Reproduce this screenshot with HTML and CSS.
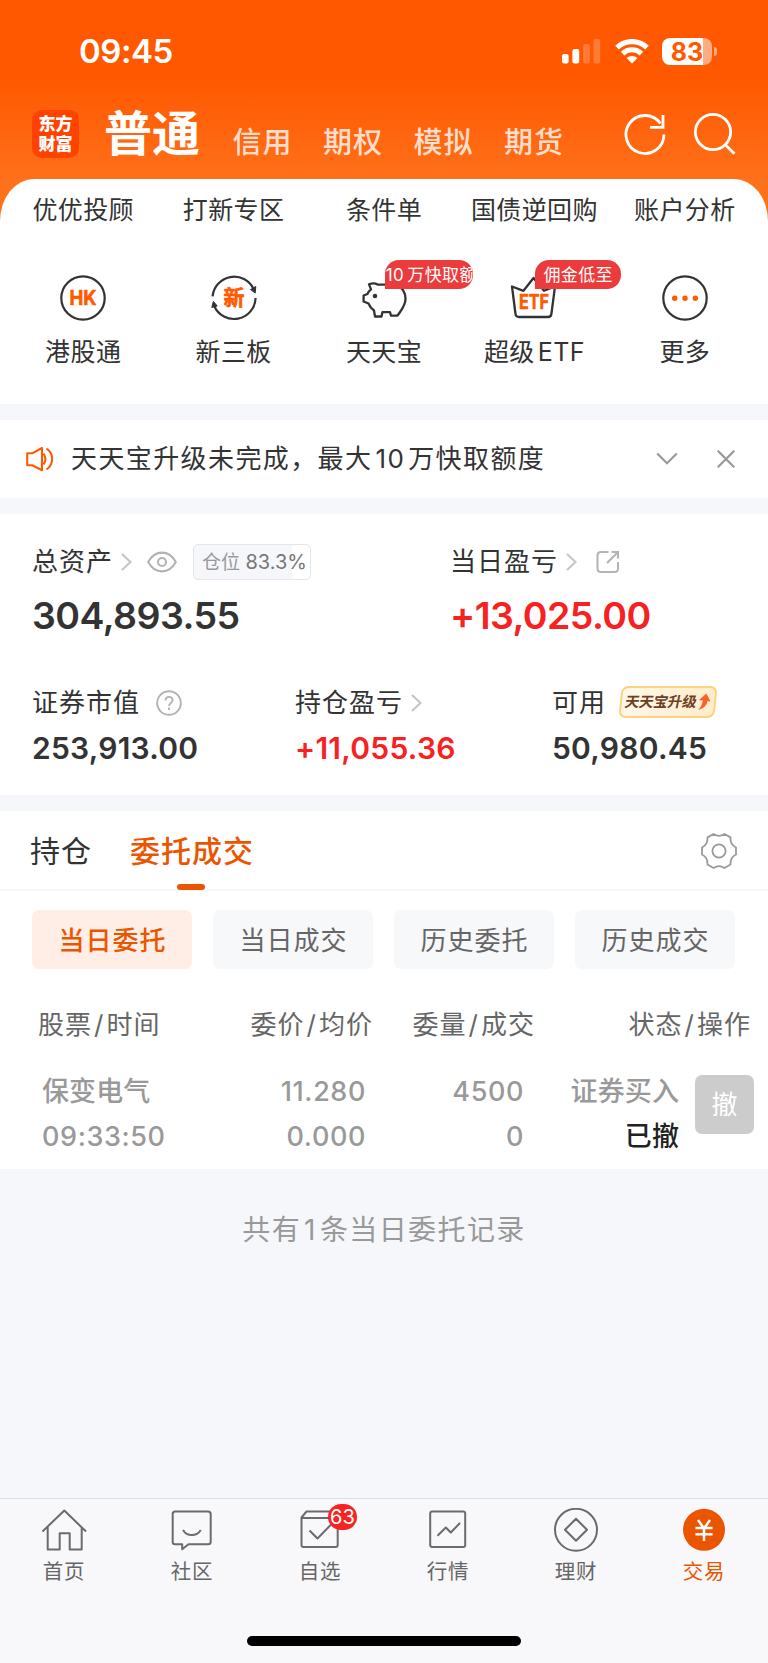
FILE: index.html
```
<!DOCTYPE html>
<html lang="zh-CN">
<head>
  <meta charset="UTF-8">
  <meta name="viewport" content="width=device-width, initial-scale=1.0">
  <title>交易</title>
  <link rel="stylesheet" href="styles.css">
</head>
<body>
  <header class="header">
    <div class="status-bar">
      <div class="time">09:45</div>
      <svg class="signal" width="39" height="25" viewBox="0 0 39 25" fill="#fff">
        <rect x="0" y="15" width="6.6" height="9.5" rx="2"/>
        <rect x="10.4" y="10" width="6.8" height="14.5" rx="2"/>
        <rect x="21.2" y="5" width="6.6" height="19.5" rx="2" opacity=".22"/>
        <rect x="31.4" y="0" width="6.8" height="24.5" rx="2" opacity=".22"/>
      </svg>
      <svg class="wifi" width="34" height="25" viewBox="0 0 34 25" fill="none" stroke="#fff">
        <path d="M2 8.6a21.6 21.6 0 0 1 30 0" stroke-width="5.2"/>
        <path d="M7.600 14.600a13.600 13.600 0 0 1 18.800 0" stroke-width="5"/>
        <path d="M17 24.500l-5.400-5.400a7.800 7.800 0 0 1 10.800 0z" fill="#fff" stroke="none"/>
      </svg>
      <div class="battery">83</div>
    </div>
    <nav class="top-nav">
      <div class="logo">东方<br>财富</div>
      <div class="nav-main">普通</div>
      <div class="nav-item">信用</div>
      <div class="nav-item">期权</div>
      <div class="nav-item">模拟</div>
      <div class="nav-item">期货</div>
      <svg class="refresh" width="42" height="42" viewBox="0 0 42 42" fill="none" stroke="#fff" stroke-width="2.8">
        <path d="M40 21.5A19 19 0 1 1 36.5 10.5"/>
        <path d="M39 2v12.3H26"/>
      </svg>
      <svg class="search" width="42" height="42" viewBox="0 0 42 42" fill="none" stroke="#fff" stroke-width="2.8">
        <circle cx="19" cy="19" r="17.6"/>
        <path d="M31 31.5l9.4 9.2"/>
      </svg>
    </nav>
  </header>

  <section class="shortcuts">
    <div class="shortcut-text">优优投顾</div>
    <div class="shortcut-text">打新专区</div>
    <div class="shortcut-text">条件单</div>
    <div class="shortcut-text">国债逆回购</div>
    <div class="shortcut-text">账户分析</div>

    <div class="shortcut">
      <svg width="48" height="48" viewBox="0 0 48 48" fill="none" stroke="#333" stroke-width="2.2">
        <circle cx="24" cy="24" r="21.7"/>
        <text class="icon-text" x="24" y="31" font-size="19.5" textLength="27" lengthAdjust="spacingAndGlyphs">HK</text>
      </svg>
      <span>港股通</span>
    </div>
    <div class="shortcut">
      <svg width="48" height="48" viewBox="0 0 48 48" fill="none" stroke="#333" stroke-width="2.2">
        <path d="M2.6 22.4A21.6 21.6 0 0 1 43.6 15"/>
        <path d="M45.6 24A21.6 21.6 0 0 1 4.2 32"/>
        <path d="M40.5 15.6l5.3-3.2-.6 6.6zM1.8 33.4l1.6-6 3.8 4.6z" fill="#333" stroke-width="1"/>
        <text class="icon-text" x="24" y="31.4" font-size="21">新</text>
      </svg>
      <span>新三板</span>
    </div>
    <div class="shortcut">
      <svg width="48" height="48" viewBox="0 0 48 48" fill="none" stroke="#333" stroke-width="2.3" stroke-linejoin="round">
        <path d="M9 10.3q5-2 9 .4h18c6 2 9.5 8 9.5 14 0 7-4 11-8 17h-6.500l-1-3.600H22.500l-1 4.400h-6.500l-1-6c-3-2-4.500-4.500-5.500-7L3.600 27.500v-6L7.500 20c.6-2 1.800-3.300 3.500-4.600z"/>
        <circle cx="15" cy="22" r="2.3" fill="#333" stroke="none"/>
      </svg>
      <em class="badge badge-clip">10<i></i>万快取额</em>
      <span>天天宝</span>
    </div>
    <div class="shortcut">
      <svg width="48" height="48" viewBox="0 0 48 48" fill="none" stroke="#333" stroke-width="2.3" stroke-linejoin="round">
        <path d="M2 12.5L5.500 40q.3 3 3.500 3h29q3 0 3.400-3L45 12.500l-11 4.300L23.500 4 13.500 16.800z"/>
        <text class="icon-text" x="24" y="35.4" font-size="20" textLength="30" lengthAdjust="spacingAndGlyphs">ETF</text>
      </svg>
      <em class="badge">佣金低至</em>
      <span>超级<i></i>ETF</span>
    </div>
    <div class="shortcut">
      <svg width="48" height="48" viewBox="0 0 48 48" fill="none" stroke="#333" stroke-width="2.2">
        <circle cx="24" cy="24" r="21.7"/>
        <g fill="#ff5a00" stroke="none">
          <circle cx="13.7" cy="24.2" r="2.7"/>
          <circle cx="24" cy="24.2" r="2.7"/>
          <circle cx="34.3" cy="24.2" r="2.7"/>
        </g>
      </svg>
      <span>更多</span>
    </div>
  </section>

  <section class="notice">
    <svg width="28" height="26" viewBox="0 0 28 26" fill="none" stroke="#ff5a00" stroke-width="2.1" stroke-linejoin="round">
      <path d="M1.2 7.3h5L16 2v22.300l-9.800-5H1.200z"/>
      <path d="M17.5 7.5q3.800 5.600 0 11M20.500 2.500c7.500 5 7.500 16 0 21"/>
    </svg>
    <p>天天宝升级未完成，最大<i></i>10<i></i>万快取额度</p>
    <svg class="down" width="22" height="14" viewBox="0 0 22 14" fill="none" stroke="#999" stroke-width="2.2"><path d="M1.2 1.5L11 11.200l9.800-9.700"/></svg>
    <svg width="18" height="18" viewBox="0 0 18 18" fill="none" stroke="#999" stroke-width="2.2"><path d="M.7.7l16.600 16.600M17.300.7L.7 17.300"/></svg>
  </section>

  <section class="assets">
    <div class="asset-row big">
      <div class="asset">
        <div class="label">
          总资产
          <svg class="arrow" width="11" height="18" viewBox="0 0 11 18"><path d="M1 1l8.500 8L1 17"/></svg>
          <svg class="eye" width="30" height="22" viewBox="0 0 30 22" fill="none" stroke="#b3b3b3" stroke-width="2.1">
            <path d="M1.2 11C8-1.500 22-1.500 28.800 11 22 23.500 8 23.500 1.200 11z"/>
            <circle cx="15" cy="11" r="4"/>
          </svg>
          <span class="position">仓位 <b>83.3%</b></span>
        </div>
        <div class="value">304,893.55</div>
      </div>
      <div class="asset">
        <div class="label">
          当日盈亏
          <svg class="arrow" width="11" height="18" viewBox="0 0 11 18"><path d="M1 1l8.500 8L1 17"/></svg>
          <svg class="share" width="24" height="24" viewBox="0 0 24 24" fill="none" stroke="#b3b3b3" stroke-width="2">
            <path d="M12.5 2H5Q1.500 2 1.500 5.500v13Q1.500 22 5 22h13.500q3.500 0 3.500-3.500V12"/>
            <path d="M11 13L21.800 2.200M15.500 2H22v6.500"/>
          </svg>
        </div>
        <div class="value red">+13,025.00</div>
      </div>
    </div>
    <div class="asset-row small">
      <div class="asset">
        <div class="label">
          证券市值
          <svg class="help" width="26" height="26" viewBox="0 0 26 26" fill="none" stroke="#b3b3b3" stroke-width="1.9">
            <circle cx="13" cy="13" r="11.8"/>
            <path d="M9.6 10.500c0-4.800 7-4.600 7-.4 0 2.700-3.600 3-3.600 6M13 17.600v2.400"/>
          </svg>
        </div>
        <div class="value">253,913.00</div>
      </div>
      <div class="asset">
        <div class="label">
          持仓盈亏
          <svg class="arrow" width="11" height="18" viewBox="0 0 11 18"><path d="M1 1l8.500 8L1 17"/></svg>
        </div>
        <div class="value red">+11,055.36</div>
      </div>
      <div class="asset">
        <div class="label">
          可用
          <span class="upgrade"><span>天天宝升级</span>
            <svg width="13" height="18" viewBox="0 0 13 18"><path d="M7.5.5l5 8-3.200-.5c0 4-2.800 7.500-8.300 9 2.600-2.800 3.600-6 3.600-9.500L.8 7z" fill="#f8602d"/></svg>
          </span>
        </div>
        <div class="value">50,980.45</div>
      </div>
    </div>
  </section>

  <section class="orders">
    <div class="tabs">
      <div class="tab">持仓</div>
      <div class="tab active">委托成交</div>
      <svg class="gear" width="38" height="38" viewBox="0 0 38 38" fill="none" stroke="#999" stroke-width="1.8" stroke-linejoin="round">
        <path d="M13.5 2Q19 5.600 24.500 2L30.500 5.400Q30 12.500 36 15.500V22.500Q30 25.500 30.500 32.500L24.500 36Q19 32.400 13.500 36L7.500 32.500Q8 25.500 2 22.500V15.500Q8 12.500 7.500 5.400z"/>
        <circle cx="19" cy="19" r="6.6"/>
      </svg>
    </div>
    <div class="filters">
      <div class="filter active">当日委托</div>
      <div class="filter">当日成交</div>
      <div class="filter">历史委托</div>
      <div class="filter">历史成交</div>
    </div>
    <div class="table-head">
      <div>股票<s>/</s>时间</div>
      <div>委价<s>/</s>均价</div>
      <div>委量<s>/</s>成交</div>
      <div>状态<s>/</s>操作</div>
    </div>
    <div class="table-row">
      <div>保变电气<br><b>09:33:50</b></div>
      <div><b>11.280<br>0.000</b></div>
      <div><b>4500<br>0</b></div>
      <div>证券买入<br><strong>已撤</strong></div>
      <button class="cancel">撤</button>
    </div>
  </section>

  <p class="total">共有<i></i>1<i></i>条当日委托记录</p>

  <footer class="tab-bar">
    <div class="tab-items">
      <div class="tab-item">
        <svg width="46" height="46" viewBox="0 0 46 46"><path d="M1.5 23.5L23.300 2.500l21.700 21M6.700 19v22.500h12V25.300h10V41.500h12V19"/></svg>
        首页
      </div>
      <div class="tab-item">
        <svg width="46" height="46" viewBox="0 0 46 46"><path d="M6 3.5h33q2.700 0 2.700 2.500v28q0 2.300-2.700 2.300H19.500l-6.300 5v-5H6q-2.300 0-2.300-2.300V6Q3.700 3.500 6 3.500zM14 22c4 6.800 13.500 6.800 17.800 0"/></svg>
        社区
      </div>
      <div class="tab-item">
        <svg width="46" height="46" viewBox="0 0 46 46"><path d="M4.5 10h36.200v27q0 2-2 2H6.500q-2 0-2-2V9.500L9.500 3.500H41M12.500 22.500l8 8L36 14.500"/></svg>
        <em class="count">63</em>
        自选
      </div>
      <div class="tab-item">
        <svg width="46" height="46" viewBox="0 0 46 46"><rect x="5.2" y="3.5" width="35" height="35.5" rx="2"/><path d="M12.500 27.700l8.300-8.200 5 5L35 15"/></svg>
        行情
      </div>
      <div class="tab-item">
        <svg width="46" height="46" viewBox="0 0 46 46"><circle cx="23" cy="21.8" r="21"/><path d="M23 10.800l11 11-11 11-11-11z"/></svg>
        理财
      </div>
      <div class="tab-item active">
        <svg width="46" height="46" viewBox="0 0 46 46"><circle cx="23" cy="21.8" r="21"/><path d="M17 12l6 8.500 6-8.500M23 20v13M14.500 20H31.500M14.500 26.300H31.500"/></svg>
        交易
      </div>
    </div>
    <div class="home-indicator"></div>
  </footer>
</body>
</html>
```
FILE: styles.css
```
* {
  box-sizing: border-box;
  margin: 0;
  padding: 0;
}

body {
  width: 768px;
  height: 1663px;
  display: flex;
  flex-direction: column;
  overflow: hidden;
  font-family: Inter, "Noto Sans CJK SC", sans-serif;
  color: #333;
  background: linear-gradient(#ff5800 76px, #ff701a 180px) top / 100% 230px no-repeat #f6f7fa;
}

svg {
  display: block;
  flex: none;
}

/* small gap between chinese text and numbers */
i {
  display: inline-block;
  width: 3px;
}

/* header */
.header {
  height: 179px;
  color: #fff;
}
.status-bar {
  display: flex;
  align-items: center;
  height: 102px;
  padding: 0 56px 0 79px;
}
.time {
  flex: 1;
  font-size: 33px;
  font-weight: 600;
  line-height: 40px;
  letter-spacing: -.5px;
}
.signal {
  margin-right: 14px;
}
.wifi {
  margin-right: 13px;
}
.battery {
  position: relative;
  width: 50px;
  height: 27px;
  border-radius: 8px;
  background: linear-gradient(90deg, #fff 41px, rgba(255, 255, 255, .5) 41px);
  color: #ff5800;
  font-size: 25px;
  font-weight: 700;
  line-height: 28px;
  text-align: center;
}
.battery::after {
  content: "";
  position: absolute;
  right: -5px;
  top: 9px;
  width: 3px;
  height: 9px;
  border-radius: 0 3px 3px 0;
  background: rgba(255, 255, 255, .5);
}
.top-nav {
  display: flex;
  height: 66px;
  padding-left: 32px;
}
.logo {
  width: 47px;
  height: 48px;
  margin: 8px 25px 0 0;
  padding-top: 4px;
  border-radius: 10px;
  background: #ff4200;
  font-size: 17px;
  font-weight: 900;
  line-height: 20px;
  text-align: center;
}
.nav-main {
  width: 128.5px;
  padding-top: 1px;
  font-size: 48px;
  font-weight: 700;
  line-height: 62px;
}
.nav-item {
  width: 90.5px;
  padding-top: 22px;
  font-size: 29px;
  font-weight: 500;
  line-height: 38px;
  letter-spacing: 1px;
  color: rgba(255, 255, 255, .8);
}
.refresh {
  margin: 11px 28px 0 29px;
}
.search {
  margin-top: 11px;
}

/* shortcuts */
.shortcuts {
  display: grid;
  grid-template-columns: repeat(5, 1fr);
  height: 225px;
  padding: 14px 8px 0 8px;
  border-radius: 34px 34px 0 0 / 42px 42px 0 0;
  background: #fff;
  align-content: start;
  font-size: 25px;
  letter-spacing: .4px;
}
.shortcut-text {
  line-height: 34px;
  text-align: center;
  white-space: nowrap;
}
.shortcut {
  position: relative;
  display: flex;
  flex-direction: column;
  align-items: center;
  padding-top: 47px;
  line-height: 34px;
}
.shortcut > span {
  margin-top: 13px;
}
.icon-text {
  fill: #ff5a00;
  stroke: #ff5a00;
  stroke-width: .6px;
  font-weight: 700;
  text-anchor: middle;
  letter-spacing: 0;
}
.badge {
  position: absolute;
  left: 76px;
  top: 33px;
  width: 86px;
  height: 29px;
  border-radius: 14px 14px 14px 0;
  background: #ec3b3d;
  color: #fff;
  font-size: 17px;
  font-style: normal;
  line-height: 31px;
  text-align: center;
  white-space: nowrap;
}
.badge-clip {
  width: 88px;
  text-align: left;
  padding-left: 1px;
  overflow: hidden;
}

/* notice */
.notice {
  display: flex;
  align-items: center;
  height: 78px;
  margin: 16px 0;
  padding: 0 33px 0 26px;
  background: #fff;
}
.notice p {
  flex: 1;
  padding-left: 17px;
  font-size: 26px;
  line-height: 38px;
  letter-spacing: 1.4px;
}
.notice .down {
  margin: 0 39px 0 0;
}

/* assets */
.assets {
  height: 281px;
  padding: 29px 32px 0 32px;
  background: #fff;
}
.asset-row {
  display: grid;
}
.asset-row.big {
  grid-template-columns: 418px 1fr;
  height: 141px;
}
.asset-row.small {
  grid-template-columns: 263px 257px 1fr;
}
.label {
  display: flex;
  align-items: center;
  height: 38px;
  font-size: 26px;
  line-height: 36px;
  letter-spacing: 1px;
  white-space: nowrap;
}
.value {
  font-weight: 600;
}
.big .value {
  margin-top: 9px;
  font-size: 37.5px;
  line-height: 52px;
  letter-spacing: -.55px;
}
.small .value {
  margin-top: 6px;
  font-size: 30px;
  line-height: 40px;
  letter-spacing: .25px;
}
.red {
  color: #f82121;
}
.arrow {
  margin-left: 8px;
  fill: none;
  stroke: #c4c4c4;
  stroke-width: 2;
}
.eye {
  margin-left: 15px;
}
.share {
  margin-left: 19px;
}
.help {
  margin-left: 16px;
}
.position {
  width: 118px;
  height: 36px;
  margin-left: 16px;
  padding-left: 8px;
  border: 1px solid #e4e5e9;
  border-radius: 5px;
  background: linear-gradient(90deg, #f6f7fa 98px, #fff 98px);
  color: #999;
  font-size: 19px;
  line-height: 35px;
  letter-spacing: 0;
}
.position b {
  font-weight: 400;
  font-size: 20px;
  color: #777;
}
.upgrade {
  display: flex;
  align-items: center;
  justify-content: center;
  gap: 2px;
  width: 96px;
  height: 32px;
  margin: -3px 0 0 14px;
  border: 2px solid #fcd27c;
  border-radius: 7px;
  background: linear-gradient(90deg, #fff8ea, #ffeccb);
  color: #6e4022;
  font-size: 14.5px;
  font-weight: 700;
  line-height: 28px;
  letter-spacing: -.2px;
  transform: skewX(-6deg);
}
.upgrade > span {
  transform: skewX(-6deg);
}

/* orders */
.orders {
  height: 358px;
  margin-top: 16px;
  background: #fff;
}
.tabs {
  display: flex;
  height: 80px;
  padding: 0 30px;
  border-bottom: 2px solid #f6f7fa;
  font-size: 30px;
  line-height: 80px;
  letter-spacing: 1px;
}
.tab {
  position: relative;
  margin-right: 38px;
}
.tab.active {
  font-weight: 500;
  color: #ec5500;
}
.tab.active::after {
  content: "";
  position: absolute;
  left: 47px;
  bottom: -1px;
  width: 28px;
  height: 6px;
  border-radius: 3px;
  background: #ec5500;
}
.gear {
  margin: 21px 0 0 auto;
}
.filters {
  display: grid;
  grid-template-columns: repeat(4, 160px);
  gap: 21px;
  padding: 19px 32px 0 32.4px;
}
.filter {
  height: 59px;
  border-radius: 7px;
  background: #f7f8fa;
  color: #666;
  font-size: 26px;
  line-height: 61px;
  letter-spacing: 1px;
  text-align: center;
}
.filter.active {
  background: #ffeee6;
  color: #ec5500;
  font-weight: 500;
}
.table-head,
.table-row {
  display: grid;
  text-align: right;
  letter-spacing: 1px;
}
.table-head {
  grid-template-columns: 150px 185px 162px 216px;
  padding: 36px 0 0 38px;
  color: #666;
  font-size: 26px;
  line-height: 40px;
}
.table-head s {
  margin: 0 2px;
  text-decoration: none;
}
.table-row {
  grid-template-columns: 150px 174px 158px 155px 76px;
  padding: 24px 0 0 42px;
  color: #999;
  font-size: 27px;
  font-weight: 500;
  line-height: 45px;
  letter-spacing: .1px;
}
.table-row b {
  font-weight: 550;
  letter-spacing: .6px;
}
.table-head div:first-child,
.table-row div:first-child {
  text-align: left;
}
.table-row strong {
  font-weight: 500;
  color: #222;
}
.cancel {
  width: 59px;
  height: 59px;
  margin: 6px 0 0 16px;
  border: 0;
  border-radius: 7px;
  background: #ccc;
  color: #fff;
  font: inherit;
  font-size: 26px;
  font-weight: 400;
}

.total {
  flex: 1;
  padding-top: 41px;
  color: #999;
  font-size: 28px;
  line-height: 40px;
  letter-spacing: 1.4px;
  text-align: center;
}

/* bottom bar */
.tab-bar {
  height: 165px;
  border-top: 1px solid #dfdfe2;
  background: #f8f8fb;
}
.tab-items {
  display: grid;
  grid-template-columns: repeat(6, 128px);
  height: 137px;
}
.tab-item {
  position: relative;
  display: flex;
  flex-direction: column;
  align-items: center;
  padding-top: 9px;
  color: #666;
  font-size: 20.5px;
  line-height: 36px;
  letter-spacing: .8px;
}
.tab-item svg {
  fill: none;
  stroke: #6b6b6b;
  stroke-width: 2;
  stroke-linejoin: round;
}
.tab-item.active {
  color: #ec5500;
}
.tab-item.active circle {
  fill: #ec5500;
  stroke: none;
}
.tab-item.active path {
  stroke: #fff;
  stroke-width: 2.5;
}
.count {
  position: absolute;
  left: 72px;
  top: 5px;
  width: 29px;
  height: 26px;
  border-radius: 13px;
  background: #f72323;
  color: #fff;
  font-size: 20px;
  font-style: normal;
  line-height: 27px;
  letter-spacing: 0;
  text-align: center;
}
.home-indicator {
  width: 274px;
  height: 10px;
  margin: 0 auto;
  border-radius: 5px;
  background: #000;
}
```
